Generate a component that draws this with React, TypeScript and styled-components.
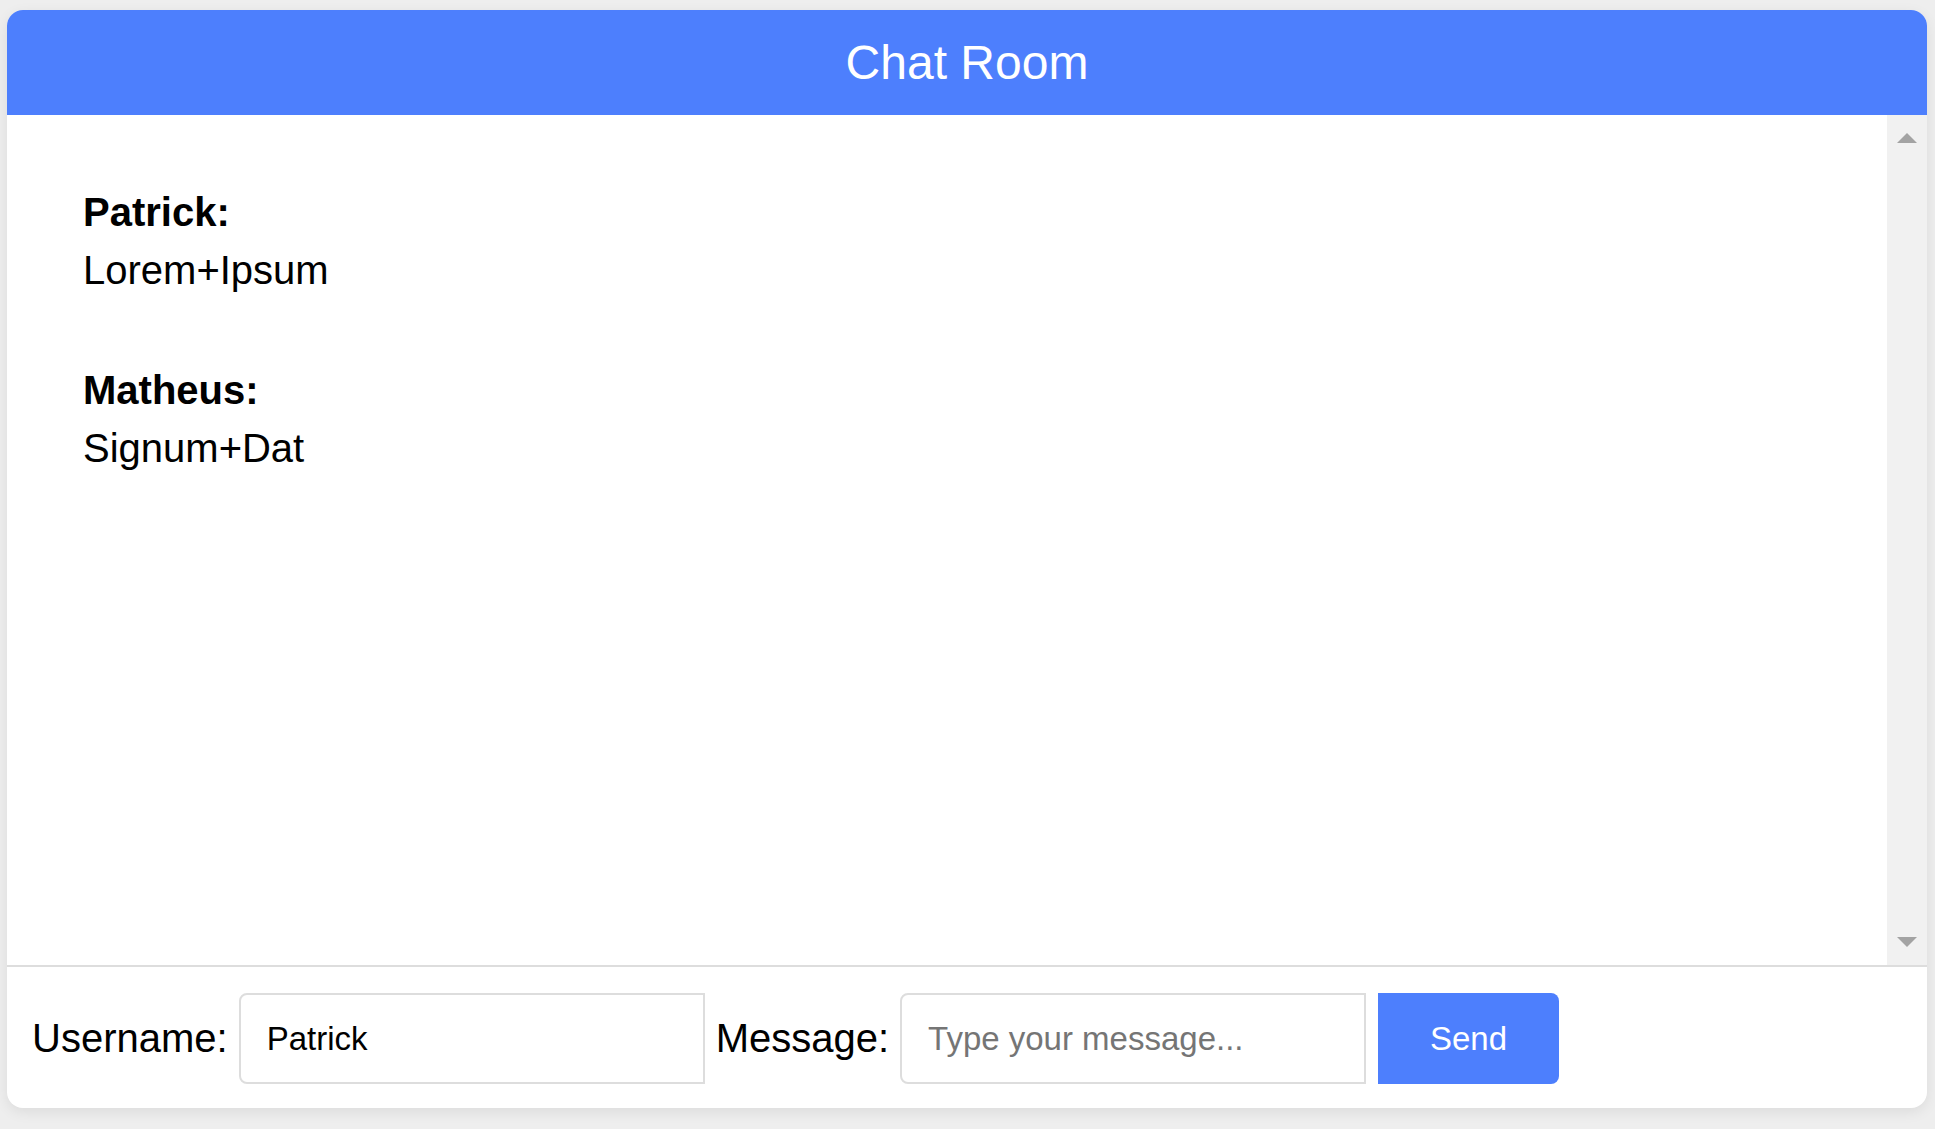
import React from "react";
import styled, { createGlobalStyle } from "styled-components";

const GlobalStyle = createGlobalStyle`
  html, body {
    margin: 0;
    padding: 0;
    background: #eeeeee;
    font-family: "Liberation Sans", Arial, sans-serif;
  }
  * { box-sizing: border-box; }
`;

const Page = styled.div`
  padding: 10px 8px 21px 7px;
`;

const Card = styled.div`
  background: #ffffff;
  border-radius: 16px;
  overflow: hidden;
  box-shadow: 0 4px 14px rgba(0, 0, 0, 0.08);
  display: flex;
  flex-direction: column;
`;

const Header = styled.header`
  height: 105px;
  background: #4d7ffd;
  color: #ffffff;
  display: flex;
  align-items: center;
  justify-content: center;
  font-size: 48px;
`;

const Body = styled.div`
  display: flex;
  height: 850px;
`;

const MessageList = styled.div`
  flex: 1;
  padding: 74px 76px;
  display: flex;
  flex-direction: column;
  gap: 74px;
`;

const Message = styled.div`
  display: flex;
  flex-direction: column;
  gap: 12px;
  font-size: 40px;
  line-height: 46px;
  color: #000;
`;

const Name = styled.strong`
  font-weight: 700;
`;

const ScrollTrack = styled.div`
  width: 40px;
  background: #f1f1f1;
  display: flex;
  flex-direction: column;
  justify-content: space-between;
  align-items: center;
  padding: 18px 0 18px 0;
`;

const Footer = styled.form`
  border-top: 2px solid #dddddd;
  height: 143px;
  display: flex;
  align-items: center;
  padding: 2px 24px 0 25px;
`;

const Label = styled.label`
  font-size: 40px;
  color: #000;
  margin-right: 11px;
`;

const Input = styled.input`
  width: 466px;
  height: 91px;
  border: 2px solid #dddddd;
  border-radius: 8px 0 0 8px;
  padding: 0 26px;
  font-family: "Liberation Sans", Arial, sans-serif;
  font-size: 33px;
  color: #000;
  margin-right: 11px;
  outline: none;
  &::placeholder {
    color: #757575;
  }
`;

const SendButton = styled.button`
  width: 181px;
  height: 91px;
  margin-left: 1px;
  border: none;
  border-radius: 0 8px 8px 0;
  background: #4d7ffd;
  color: #ffffff;
  font-family: "Liberation Sans", Arial, sans-serif;
  font-size: 33px;
  cursor: pointer;
`;

const Arrow = ({ down }: { down?: boolean }) => (
  <svg width="20" height="10" viewBox="0 0 20 10">
    <path d={down ? "M0 0 L20 0 L10 10 Z" : "M0 10 L20 10 L10 0 Z"} fill="#a3a3a3" />
  </svg>
);

const messages = [
  { name: "Patrick", text: "Lorem+Ipsum" },
  { name: "Matheus", text: "Signum+Dat" },
];

export default function App() {
  return (
    <>
      <GlobalStyle />
      <Page>
        <Card>
          <Header>Chat Room</Header>
          <Body>
            <MessageList>
              {messages.map((m) => (
                <Message key={m.name}>
                  <Name>{m.name}:</Name>
                  <span>{m.text}</span>
                </Message>
              ))}
            </MessageList>
            <ScrollTrack>
              <Arrow />
              <Arrow down />
            </ScrollTrack>
          </Body>
          <Footer onSubmit={(e) => e.preventDefault()}>
            <Label htmlFor="username">Username:</Label>
            <Input id="username" defaultValue="Patrick" />
            <Label htmlFor="message">Message:</Label>
            <Input id="message" placeholder="Type your message..." />
            <SendButton type="submit">Send</SendButton>
          </Footer>
        </Card>
      </Page>
    </>
  );
}
